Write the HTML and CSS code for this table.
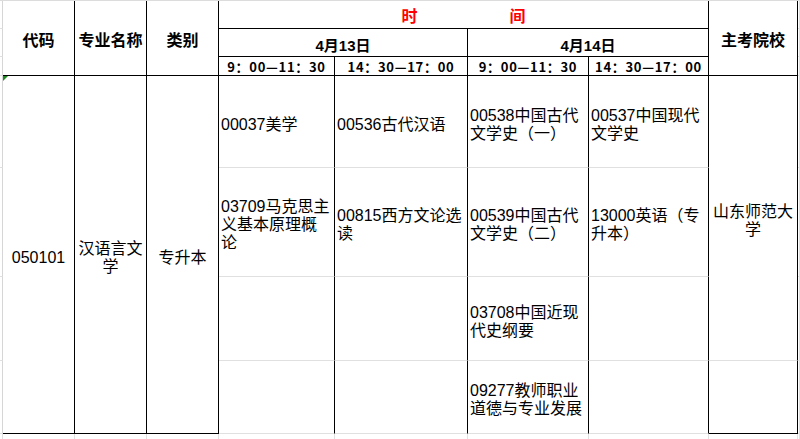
FILE: index.html
```html
<!DOCTYPE html>
<html lang="zh-CN">
<head>
<meta charset="utf-8">
<title>考试安排</title>
<link rel="stylesheet" href="styles.css">
</head>
<body>
<div class="sheet">
  <div class="grid">
    <!-- row 1 -->
    <div class="strip"></div>
    <div class="c h center span3r">代码</div>
    <div class="c h center span3r">专业名称</div>
    <div class="c h center span3r">类别</div>
    <div class="c h center span4c red"><span>时</span><span>间</span></div>
    <div class="c h center span3r">主考院校</div>
    <div class="strip-r"></div>
    <!-- row 2 -->
    <div class="strip"></div>
    <div class="c date center span2c">4月13日</div>
    <div class="c date center span2c">4月14日</div>
    <div class="strip-r"></div>
    <!-- row 3 -->
    <div class="strip"></div>
    <div class="c time center">9：00—11：30</div>
    <div class="c time center">14：30—17：00</div>
    <div class="c time center">9：00—11：30</div>
    <div class="c time center">14：30—17：00</div>
    <div class="strip-r"></div>
    <!-- row 4 -->
    <div class="strip"></div>
    <div class="c t center span4r mark">050101</div>
    <div class="c t center span4r">汉语言文<br>学</div>
    <div class="c t center span4r">专升本</div>
    <div class="c t gb">00037美学</div>
    <div class="c t gb">00536古代汉语</div>
    <div class="c t gb">00538中国古代<br>文学史（一）</div>
    <div class="c t gb">00537中国现代<br>文学史</div>
    <div class="c t center gb span3r">山东师范大<br>学</div>
    <div class="strip-r"></div>
    <!-- row 5 -->
    <div class="strip"></div>
    <div class="c t gb">03709马克思主<br>义基本原理概<br>论</div>
    <div class="c t gb">00815西方文论选<br>读</div>
    <div class="c t gb">00539中国古代<br>文学史（二）</div>
    <div class="c t gb">13000英语（专<br>升本）</div>
    <div class="strip-r"></div>
    <!-- row 6 -->
    <div class="strip"></div>
    <div class="c t gb"></div>
    <div class="c t gb"></div>
    <div class="c t gb">03708中国近现<br>代史纲要</div>
    <div class="c t gb"></div>
    <div class="strip-r"></div>
    <!-- row 7 -->
    <div class="strip"></div>
    <div class="c t gb"></div>
    <div class="c t gb"></div>
    <div class="c t gb">09277教师职业<br>道德与专业发展</div>
    <div class="c t gb"></div>
    <div class="c t"></div>
    <div class="strip-r"></div>
    <!-- row 8 (below table) -->
    <div class="tail"></div>
    <div class="tail"></div>
    <div class="tail"></div>
    <div class="tail"></div>
    <div class="tail"></div>
    <div class="tail"></div>
    <div class="tail"></div>
    <div class="tail"></div>
    <div class="tail"></div>
    <div class="tail"></div>
  </div>
</div>
</body>
</html>
```

FILE: styles.css
```css
html, body {
  margin: 0;
  padding: 0;
  background: #fff;
}

body {
  font-family: "Liberation Sans", "Noto Sans CJK SC", "Noto Sans CJK TC", sans-serif;
  color: #000;
}

.sheet {
  position: relative;
  width: 800px;
  height: 439px;
  overflow: hidden;
  border-top: 1px solid #dcdcdc;
  box-sizing: border-box;
}

/* selected column indicator in the sheet header edge */
.sheet::before {
  content: "";
  position: absolute;
  top: -1px;
  left: 588px;
  width: 121px;
  height: 1px;
  background: #3f9a32;
}

.grid {
  display: grid;
  grid-template-columns: 3px 72px 72px 72px 116px 133px 121px 120px 89px 2px;
  grid-template-rows: 28px 28px 19px 92px 109px 84px 73px 5px;
}

.c {
  box-sizing: border-box;
  border-right: 1px solid #000;
  border-bottom: 1px solid #000;
  display: flex;
  flex-direction: column;
  justify-content: center;
  align-items: flex-start;
  min-width: 0;
}

.center {
  align-items: center;
  text-align: center;
}

.gb {
  border-bottom-color: #e0e0e0;
}

.span3r { grid-row: span 3; }
.span4r { grid-row: span 4; }
.span2c { grid-column: span 2; }
.span4c { grid-column: span 4; }

.strip {
  border-right: 1px solid #d6d6d6;
  border-bottom: 1px solid #e0e0e0;
}

.strip-r {
  border-right: 1px solid #e0e0e0;
  border-bottom: 1px solid #e0e0e0;
}

.tail {
  border-right: 1px solid #e0e0e0;
}

.tail:first-child {
  border-right-color: #d6d6d6;
}

.h {
  font-size: 16px;
  font-weight: 700;
  line-height: 18px;
  padding-top: 5px;
}

.red {
  color: #ff0000;
  flex-direction: row;
  justify-content: center;
  gap: 92px;
  padding-top: 4px;
}

.date {
  font-size: 15px;
  font-weight: 700;
  line-height: 18px;
  padding-top: 6px;
}

.time {
  font-family: "Noto Sans CJK SC", "Noto Sans CJK TC", sans-serif;
  font-size: 13px;
  font-weight: 700;
  line-height: 18px;
  letter-spacing: 0.7px;
  white-space: nowrap;
  padding-top: 1px;
}

.t {
  font-size: 16px;
  line-height: 18px;
  padding-left: 2px;
  padding-top: 6px;
  white-space: nowrap;
}

.t.center {
  padding-left: 0;
}

.mark {
  position: relative;
}

.mark::before {
  content: "";
  position: absolute;
  top: 0;
  left: 0;
  width: 0;
  height: 0;
  border-top: 5px solid #1f8a1f;
  border-right: 5px solid transparent;
}
```
